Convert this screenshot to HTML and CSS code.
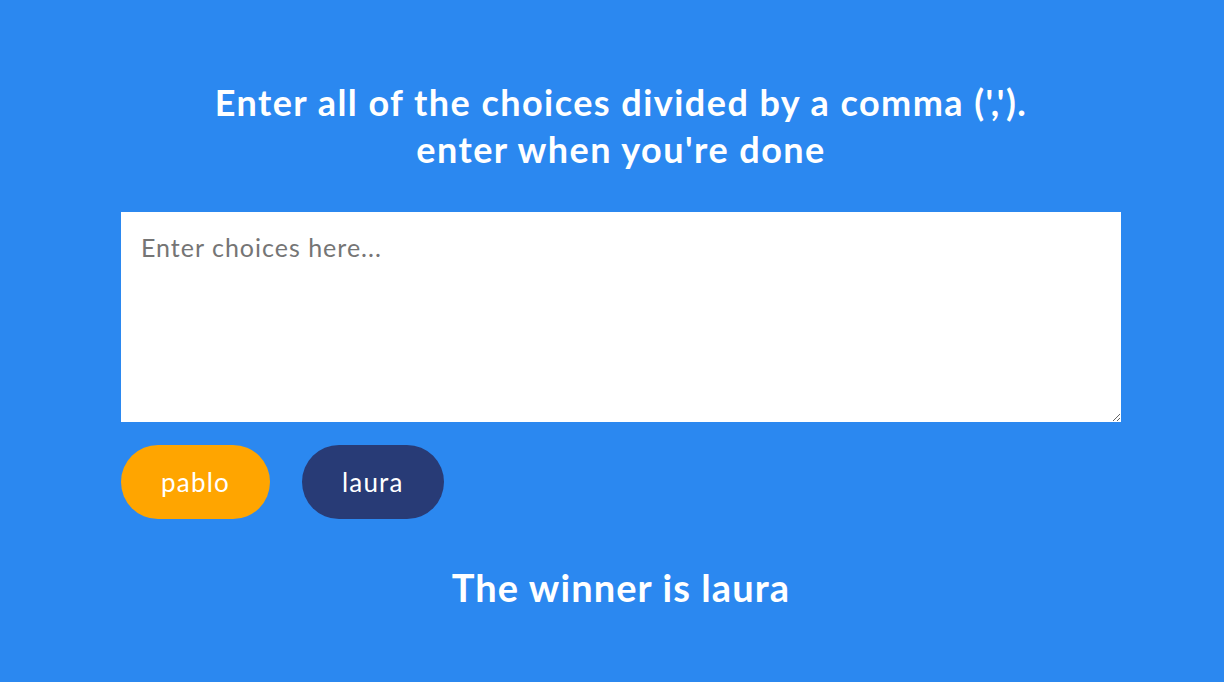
FILE: index.html
```html
<!DOCTYPE html>
<html>
<head>
<meta charset="utf-8">
<link rel="stylesheet" href="styles.css">
</head>
<body>
<main class="app">
  <h1 class="title">Enter all of the choices divided by a comma (',').<br>enter when you're done</h1>
  <textarea class="choices" placeholder="Enter choices here..."></textarea>
  <div class="tags">
    <span class="tag tag-orange">pablo</span>
    <span class="tag tag-dark">laura</span>
  </div>
  <h2 class="winner">The winner is laura</h2>
</main>
</body>
</html>
```
FILE: styles.css
```css
html, body {
  margin: 0;
  height: 100%;
}
body {
  background: #2b88f0;
  font-family: Lato, "Open Sans", sans-serif;
  color: #fff;
  padding-left: 18px;
  box-sizing: border-box;
}
.app {
  width: 1000px;
  margin: 0 auto;
  padding-top: 79px;
  display: flex;
  flex-direction: column;
}
.title {
  margin: 0;
  text-align: center;
  font-size: 36px;
  font-weight: 700;
  line-height: 47px;
  letter-spacing: 1.45px;
}
.choices {
  margin-top: 39px;
  height: 210px;
  width: 1000px;
  box-sizing: border-box;
  border: none;
  padding: 20px;
  font-family: inherit;
  font-size: 25px;
  letter-spacing: 1px;
  color: #333;
  outline: none;
  display: block;
}
.choices::placeholder {
  color: #757575;
}
.tags {
  margin-top: 23px;
  display: flex;
  gap: 32px;
}
.tag {
  display: inline-flex;
  align-items: center;
  justify-content: center;
  height: 74px;
  padding: 0 40px;
  border-radius: 37px;
  font-size: 26px;
  letter-spacing: 1.2px;
  color: #fff;
}
.tag-orange { background: #ffa500; }
.tag-dark { background: #283b76; }
.winner {
  margin: 45px 0 0;
  text-align: center;
  font-size: 38px;
  font-weight: 700;
  line-height: 46px;
  letter-spacing: 1.1px;
}
```
